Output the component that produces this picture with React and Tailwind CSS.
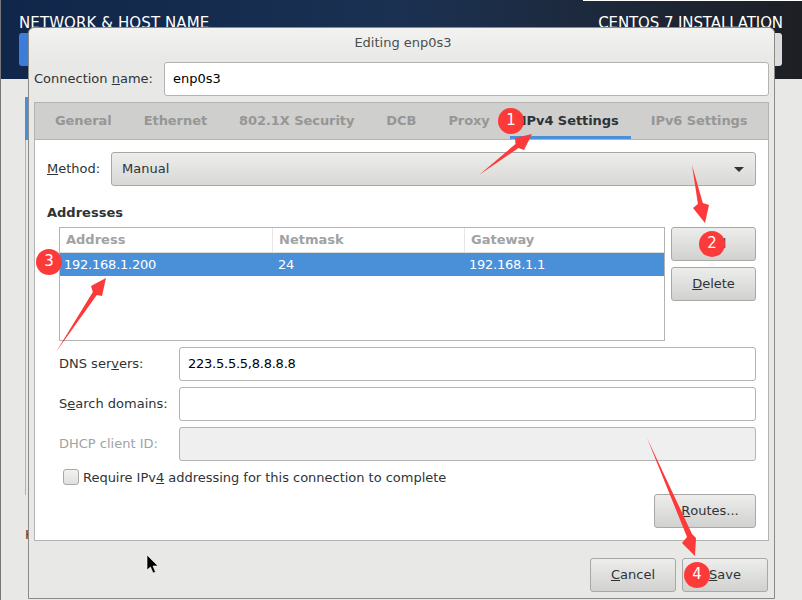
import React from 'react';

function Btn({ children, className = '' }) {
  return (
    <button className={`h-[34px] rounded-[3px] border border-[#a8a8a6] bg-gradient-to-b from-[#ededeb] to-[#d1d1cf] text-[13px] text-[#2e3436] flex items-center justify-center ${className}`}>
      {children}
    </button>
  );
}

function Entry({ value, disabled, className = '' }) {
  return (
    <div className={`h-[34px] rounded-[3px] border border-[#b3b3b1] px-2 flex items-center text-[13px] text-black ${disabled ? 'bg-[#efefef]' : 'bg-white'} ${className}`}>
      {value}
    </div>
  );
}

function Tab({ label, active }) {
  return (
    <div className={`mx-1 px-3 h-full flex items-center whitespace-nowrap font-bold text-[13px] tracking-[-0.07px] border-b-[3px] pt-[3px] ${active ? 'text-[#2e3436] border-[#4a90d9]' : 'text-[#969696] border-transparent'}`}>
      {label}
    </div>
  );
}

function Row({ label, value, disabled }) {
  return (
    <div className="flex items-center">
      <div className={`w-[120px] text-[13px] ${disabled ? 'text-[#a0a2a3]' : 'text-[#2e3436]'}`}>{label}</div>
      <Entry value={value} disabled={disabled} className="flex-1" />
    </div>
  );
}

// red annotation arrows + numbered badges pasted on the screenshot
function Annotations() {
  const badges = [[511, 121, '1'], [712, 244, '2'], [49, 262, '3'], [697, 575, '4']];
  return (
    <svg className="absolute left-0 top-0" width="802" height="600" viewBox="0 0 802 600">
      <g fill="#fd3a3a">
        <polygon points="479,175 515.5,144 515,138 532,134 524,150 518.5,148" />
        <polygon points="692,165 702.8,203 709,205 705,223 693,208 697.9,204" />
        <polygon points="56,352 92.8,292.1 91,286 106,278 102,296 96.8,294.9" />
        <polygon points="647,438 692,534 696,538 695,556 682,543 687,537" />
      </g>
      {badges.map(([x, y, n]) => (
        <g key={n}>
          <circle cx={x} cy={y} r="13" fill="#fd3a3a" />
          <text x={x} y={y + 4} textAnchor="middle" fill="#fff" fontSize="15" fontFamily="'DejaVu Sans', sans-serif">{n}</text>
        </g>
      ))}
      {/* mouse pointer */}
      <path d="M147 555 L147 570 L150.5 567 L153 573 L155.5 572 L153 566 L158 566 Z" fill="#000" stroke="#fff" strokeWidth="0.6" />
    </svg>
  );
}

export default function App() {
  return (
    <div className="relative w-[802px] h-[600px] overflow-hidden bg-[#e8e8e7] font-['DejaVu_Sans',sans-serif]">
      {/* installer screen behind the dialog */}
      <div className="h-[79px] bg-gradient-to-r from-[#10264a] via-[#1b3152] to-[#1d1f24] relative">
        <div className="absolute right-0 top-0 w-[219px] h-px bg-white" />
        <div className="absolute left-[19px] top-[13px] text-white text-[15px] font-medium tracking-[0.1px] leading-5">NETWORK &amp; HOST NAME</div>
        <div className="absolute right-[19px] top-[13px] text-white text-[15px] tracking-[-0.1px] leading-5">CENTOS 7 INSTALLATION</div>
        <div className="absolute left-[19px] top-[33px] w-[30px] h-[33px] rounded-[3px] bg-[#3b7dd8]" />
        <div className="absolute right-[20px] top-[33px] w-[30px] h-[33px] rounded-[3px] bg-[#dcdcda]" />
      </div>
      <div className="absolute left-0 top-0 w-px h-full bg-[#777]" />
      <div className="absolute left-[25px] top-[97px] w-[3px] h-[43px] bg-[#4a90d9]" />
      <div className="absolute left-[25px] top-[140px] w-[3px] h-[355px] border-l border-[#b3b3b1]" />
      <div className="absolute left-[25px] top-[525px] text-[13px] text-[#2e3436]">H</div>

      {/* Editing dialog */}
      <div className="absolute left-[28px] top-[27px] w-[747px] h-[572px] rounded-t-[6px] border border-[#8a8a88] bg-[#e8e8e7] flex flex-col">
        <div className="h-[34px] shrink-0 pb-[4px] pl-[3px] rounded-t-[6px] bg-gradient-to-b from-[#f2f2f1] to-[#e8e8e7] flex items-center justify-center text-[13px] text-[#4a4f50]">
          Editing enp0s3
        </div>

        <div className="flex items-center px-[5px] h-[34px] shrink-0">
          <div className="w-[130px] text-[13px] text-[#2e3436]">Connection <u>n</u>ame:</div>
          <Entry value="enp0s3" className="flex-1" />
        </div>

        {/* notebook */}
        <div className="mx-[5px] mt-[6px] h-[439px] shrink-0 border border-[#b3b3b1] bg-white flex flex-col">
          <div className="h-[37px] shrink-0 bg-[#cfcfcd] border-b border-[#b3b3b1] flex items-center pl-1">
            <Tab label="General" />
            <Tab label="Ethernet" />
            <Tab label="802.1X Security" />
            <Tab label="DCB" />
            <Tab label="Proxy" />
            <Tab label="IPv4 Settings" active />
            <Tab label="IPv6 Settings" />
          </div>

          <div className="flex flex-col pl-3 pr-3 pt-[12px]">
            <div className="flex items-center">
              <div className="w-[64px] text-[13px] text-[#2e3436]"><u>M</u>ethod:</div>
              <div className="h-[34px] flex-1 rounded-[3px] border border-[#a8a8a6] bg-gradient-to-b from-[#ededeb] to-[#d8d8d6] flex items-center justify-between pl-[10px] pr-[11px] text-[13px] text-[#2e3436]">
                Manual
                <span className="w-0 h-0 border-l-[5px] border-r-[5px] border-t-[5px] border-l-transparent border-r-transparent border-t-[#2e3436]" />
              </div>
            </div>

            <div className="mt-[19px] font-bold text-[13px] text-[#2e3436] leading-[16px]">Addresses</div>

            <div className="mt-[6px] flex pl-3">
              <div className="w-[606px] h-[114px] border border-[#b3b3b1] bg-white">
                <div className="grid grid-cols-[213px_192px_1fr] h-[25px] font-bold text-[13px] text-[#a0a2a3] border-b border-[#dcdcda]">
                  <div className="pl-[6px] border-r border-[#e6e6e6] flex items-center">Address</div>
                  <div className="pl-[6px] border-r border-[#e6e6e6] flex items-center">Netmask</div>
                  <div className="pl-[6px] flex items-center">Gateway</div>
                </div>
                <div className="grid grid-cols-[213px_192px_1fr] h-[23px] items-center bg-[#4a90d9] text-[13px] text-white tracking-[-0.23px]">
                  <div className="pl-[4px]">192.168.1.200</div>
                  <div className="pl-[5px]">24</div>
                  <div className="pl-[4px]">192.168.1.1</div>
                </div>
              </div>
              <div className="ml-[6px] flex-1 flex flex-col gap-[6px]">
                <Btn><u>A</u>dd</Btn>
                <Btn><u>D</u>elete</Btn>
              </div>
            </div>

            <div className="mt-[6px] pl-3 flex flex-col gap-[6px]">
              <Row label={<>DNS ser<u>v</u>ers:</>} value={<span className="tracking-[-0.24px]">223.5.5.5,8.8.8.8</span>} />
              <Row label={<>S<u>e</u>arch domains:</>} value="" />
              <Row label="DHCP client ID:" value="" disabled />
            </div>

            <div className="mt-[8px] pl-4 flex items-center h-[16px] text-[13px] text-[#2e3436]">
              <span className="w-4 h-4 rounded-[3px] border border-[#a8a8a6] bg-gradient-to-b from-[#f2f2f1] to-[#e0e0de] mr-[4px]" />
              <span className="tracking-[-0.02px] pt-px">Require IPv<u>4</u> addressing for this connection to complete</span>
            </div>

            <div className="mt-[9px] flex justify-end">
              <Btn className="w-[102px] pl-[10px]"><u>R</u>outes...</Btn>
            </div>
          </div>
        </div>

        <div className="flex justify-end gap-[6px] pr-[6px] mt-[17px]">
          <Btn className="w-[86px]"><u>C</u>ancel</Btn>
          <Btn className="w-[86px]"><u>S</u>ave</Btn>
        </div>
      </div>

      <Annotations />
    </div>
  );
}
